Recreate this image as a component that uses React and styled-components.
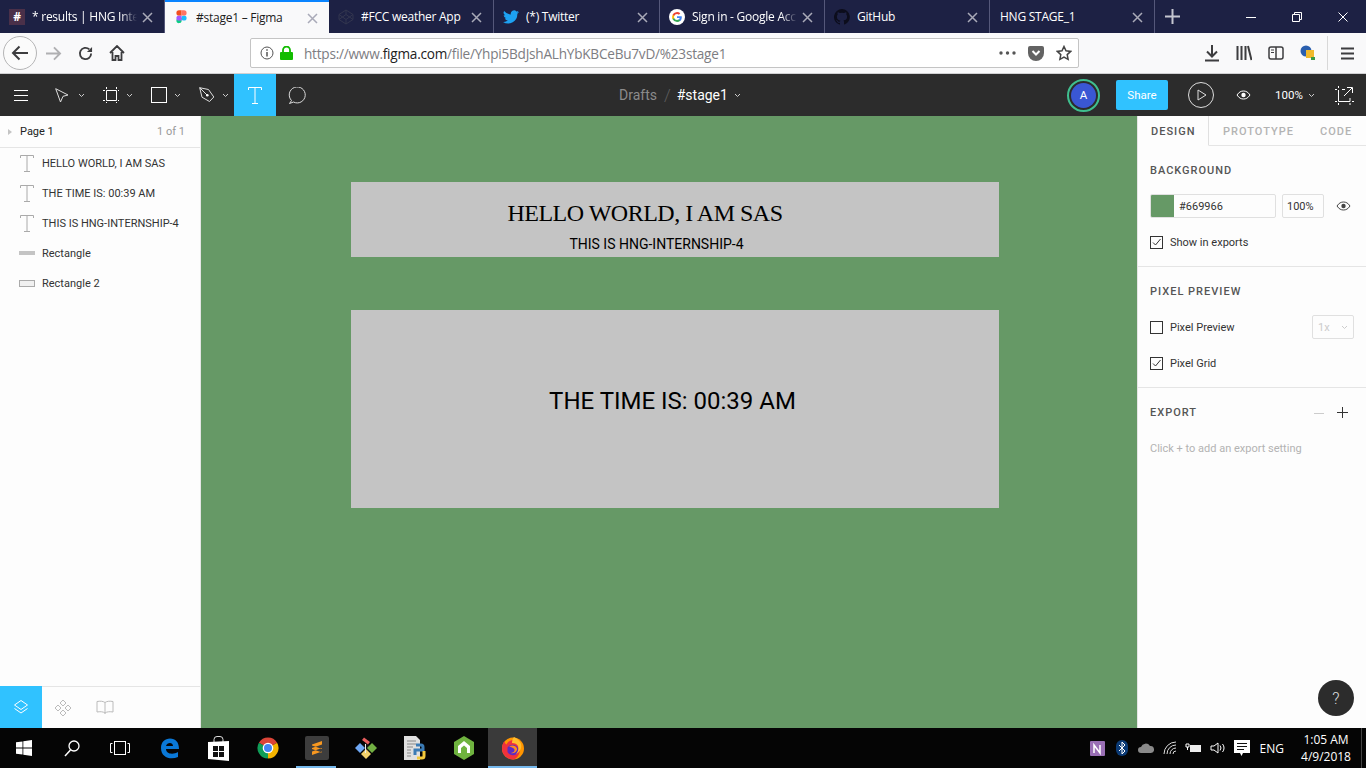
import React from 'react';
import styled, { createGlobalStyle } from 'styled-components';

const GlobalStyle = createGlobalStyle`
  html, body { margin: 0; padding: 0; background: #fff; }
  * { box-sizing: border-box; }
  body { font-family: Roboto, "Liberation Sans", sans-serif; overflow: hidden; }
`;

const Screen = styled.div`
  width: 1366px;
  height: 768px;
  display: flex;
  flex-direction: column;
  overflow: hidden;
`;

/* browser tabs */
const TabBar = styled.div`
  height: 33px;
  background: #1d2144;
  display: flex;
  align-items: stretch;
  flex-shrink: 0;
`;

const Tab = styled.div`
  width: ${p => p.$w}px;
  position: relative;
  display: flex;
  align-items: center;
  padding-left: ${p => p.$pad}px;
  font: 12px "Open Sans", "Noto Sans", sans-serif;
  letter-spacing: -0.25px;
  color: ${p => (p.$active ? '#1c1c1c' : '#fff')};
  background: ${p => (p.$active ? '#f9f9fa' : 'transparent')};
  border-top: ${p => (p.$active ? '2px solid #0a84ff' : 'none')};
  border-right: ${p => (p.$active ? 'none' : '1px solid #55587a')};
`;

const TabIcon = styled.span`
  width: 16px;
  height: 16px;
  margin-right: 7px;
  flex-shrink: 0;
  display: flex;
  align-items: center;
  justify-content: center;
`;

const TabTitle = styled.span`
  width: ${p => p.$w}px;
  white-space: nowrap;
  overflow: hidden;
  flex-shrink: 0;
  ${p => p.$fade && 'mask-image: linear-gradient(to right, #000 85%, transparent);'}
`;

const TabClose = styled.svg`
  position: absolute;
  right: 11px;
  top: 50%;
  margin-top: -5px;
  width: 11px;
  height: 11px;
`;

const HashIcon = styled.span`
  width: 16px;
  height: 16px;
  background: #4a3049;
  color: #fff;
  font: bold 12px "Open Sans", sans-serif;
  display: flex;
  align-items: center;
  justify-content: center;
`;

const NewTab = styled.div`
  width: 34px;
  display: flex;
  align-items: center;
  justify-content: center;
`;

const WindowButtons = styled.div`
  margin-left: auto;
  display: flex;
  align-items: center;
  gap: 36px;
  padding-right: 18px;
`;

/* address bar */
const NavBar = styled.div`
  height: 41px;
  background: #f9f9fa;
  border-bottom: 1px solid #d0d0d2;
  display: flex;
  align-items: center;
  padding-left: 3px;
  flex-shrink: 0;
`;

const BackButton = styled.div`
  width: 34px;
  height: 34px;
  border-radius: 50%;
  border: 1px solid #b5b5b6;
  background: #fbfbfb;
  display: flex;
  align-items: center;
  justify-content: center;
`;

const NavIcon = styled.div`
  width: 32px;
  display: flex;
  align-items: center;
  justify-content: center;
`;

const UrlBox = styled.div`
  width: 829px;
  height: 30px;
  margin-left: 117px;
  background: #fff;
  border: 1px solid #c4c4c4;
  border-radius: 2px;
  display: flex;
  align-items: center;
  padding-left: 9px;
`;

const UrlText = styled.div`
  margin-left: 11px;
  font: 13.6px "Open Sans", "Noto Sans", sans-serif;
  color: #7d7d82;
  white-space: nowrap;
  letter-spacing: -0.23px;
`;

const UrlDark = styled.span`
  color: #222;
`;

const UrlActions = styled.div`
  margin-left: auto;
  display: flex;
  align-items: center;
  gap: 12px;
  padding-right: 6px;
`;

const NavRight = styled.div`
  display: flex;
  align-items: center;
  margin-left: 125px;
`;

const NavSlot = styled.div`
  width: 32px;
  display: flex;
  justify-content: center;
  margin-left: ${p => (p.$first ? '-8px' : '0')};
`;

const NavDivider = styled.div`
  width: 1px;
  height: 34px;
  background: #d8d8d8;
  margin: 0 13px 0 3px;
`;

/* figma toolbar */
const Toolbar = styled.div`
  height: 42px;
  background: #2c2c2c;
  display: flex;
  align-items: center;
  position: relative;
  flex-shrink: 0;
`;

const ToolButton = styled.div`
  width: ${p => p.$w}px;
  height: 42px;
  display: flex;
  align-items: center;
  justify-content: center;
  background: ${p => (p.$active ? '#30c2ff' : 'transparent')};
  flex-shrink: 0;
`;

const ToolMenu = styled(ToolButton)`
  justify-content: flex-start;
  padding-left: 13px;
  gap: 7px;
`;

const Crumbs = styled.div`
  position: absolute;
  left: 619px;
  top: 0;
  height: 42px;
  display: flex;
  align-items: center;
  font-size: 14px;
  color: #8b8b8b;
`;

const CrumbSlash = styled.span`
  margin: 0 6px 0 7px;
  color: #5e5e5e;
  font-size: 17px;
  font-weight: 300;
`;

const CrumbName = styled.span`
  color: #fff;
  margin-right: 6px;
`;

const ToolbarRight = styled.div`
  margin-left: auto;
  display: flex;
  align-items: center;
  height: 42px;
`;

const AvatarRing = styled.div`
  width: 33px;
  height: 33px;
  border-radius: 50%;
  border: 2.5px solid #3fbf8f;
  padding: 2px;
  background: #2c2c2c;
  margin-right: 16px;
`;

const Avatar = styled.div`
  width: 100%;
  height: 100%;
  border-radius: 50%;
  background: #3a57d4;
  color: #fff;
  font-size: 11.5px;
  display: flex;
  align-items: center;
  justify-content: center;
`;

const ShareButton = styled.div`
  width: 52px;
  height: 30px;
  border-radius: 2px;
  background: #30c2ff;
  color: #fff;
  font-size: 11.5px;
  display: flex;
  align-items: center;
  justify-content: center;
  margin-right: 20px;
`;

const PlayIcon = styled.svg`
  margin-right: 22px;
`;

const Zoom = styled.div`
  width: 40px;
  display: flex;
  align-items: center;
  gap: 5px;
  color: #fff;
  font-size: 11.5px;
  margin: 0 20px 0 24px;
  white-space: nowrap;
`;

const ExpandIcon = styled.svg`
  margin-right: 12px;
`;

/* main area */
const Main = styled.div`
  flex: 1;
  display: flex;
  min-height: 0;
`;

const LeftPanel = styled.div`
  width: 201px;
  background: #fdfdfd;
  border-right: 1px solid #e5e5e5;
  display: flex;
  flex-direction: column;
  flex-shrink: 0;
`;

const PageRow = styled.div`
  height: 32px;
  border-bottom: 1px solid #e5e5e5;
  display: flex;
  align-items: center;
  padding: 0 15px 0 8px;
  font-size: 11px;
  color: #222;
`;

const Caret = styled.span`
  width: 0;
  height: 0;
  border-left: 4px solid #c4c4c4;
  border-top: 3px solid transparent;
  border-bottom: 3px solid transparent;
  margin-right: 8px;
`;

const PageCount = styled.span`
  margin-left: auto;
  color: #999;
`;

const LayerList = styled.div`
  flex: 1;
`;

const Layer = styled.div`
  height: 30px;
  display: flex;
  align-items: center;
  padding-left: 18px;
  font-size: 11px;
  color: #333;
`;

const LayerIcon = styled.span`
  width: 18px;
  margin-right: 6px;
  display: flex;
  justify-content: center;
  flex-shrink: 0;
`;

const LeftTabs = styled.div`
  height: 42px;
  border-top: 1px solid #e5e5e5;
  display: flex;
  align-items: stretch;
`;

const LeftTab = styled.div`
  width: 42px;
  background: ${p => (p.$active ? '#30c2ff' : 'transparent')};
  display: flex;
  align-items: center;
  justify-content: center;
  margin-top: ${p => (p.$active ? '-1px' : '0')};
`;

const Canvas = styled.div`
  flex: 1;
  background: #669966;
  padding: 66px 0 0 150px;
  display: flex;
  flex-direction: column;
  gap: 53px;
`;

const Frame = styled.div`
  width: 648px;
  height: ${p => p.$h}px;
  background: #c4c4c4;
  color: #000;
  display: flex;
  flex-direction: column;
  align-items: center;
`;

const Heading = styled.div`
  font: 24px "Liberation Serif", serif;
  letter-spacing: -0.5px;
  margin: 16px 0 0 -60px;
  line-height: 30px;
  white-space: nowrap;
`;

const SubHeading = styled.div`
  font-size: 14px;
  line-height: 16px;
  margin: 8px 0 0 -37px;
  white-space: nowrap;
`;

const TimeText = styled.div`
  font-size: 24px;
  line-height: 28px;
  margin: 77px 0 0 -5px;
  white-space: nowrap;
`;

const RightPanel = styled.div`
  width: 229px;
  background: #fdfdfd;
  border-left: 1px solid #e5e5e5;
  position: relative;
  flex-shrink: 0;
  font-size: 11px;
  color: #333;
`;

const PanelTabs = styled.div`
  height: 30px;
  display: flex;
  align-items: center;
  border-bottom: 1px solid #e5e5e5;
  font-size: 11px;
  font-weight: 500;
  letter-spacing: 1px;
`;

const PanelTab = styled.div`
  height: 30px;
  display: flex;
  align-items: center;
  width: ${p => p.$w}px;
  padding-left: ${p => p.$pad}px;
  padding-top: 1px;
  color: ${p => (p.$active ? '#555' : '#b3b3b3')};
  background: ${p => (p.$active ? '#fdfdfd' : 'transparent')};
  border-right: ${p => (p.$active ? '1px solid #e0e0e0' : 'none')};
  border-bottom: ${p => (p.$active ? '1px solid #fdfdfd' : 'none')};
  margin-top: ${p => (p.$active ? '1px' : '0')};
`;

const Section = styled.div`
  height: ${p => p.$h}px;
  padding: 18px 12px 0 12px;
  border-bottom: ${p => (p.$last ? 'none' : '1px solid #e5e5e5')};
`;

const SectionTitle = styled.div`
  font-size: 11px;
  font-weight: 500;
  letter-spacing: 1px;
  line-height: 13px;
  color: #555;
  display: flex;
  align-items: center;
  justify-content: space-between;
`;

const ColorRow = styled.div`
  display: flex;
  align-items: center;
  margin-top: 17px;
`;

const ColorField = styled.div`
  width: 126px;
  height: 24px;
  border: 1px solid #e0e0e0;
  border-radius: 2px;
  display: flex;
  align-items: center;
  overflow: hidden;
`;

const Swatch = styled.div`
  width: 23px;
  height: 24px;
  background: #669966;
  margin-right: 5px;
`;

const PercentField = styled.div`
  width: 42px;
  height: 24px;
  margin-left: 6px;
  border: 1px solid #e0e0e0;
  border-radius: 2px;
  display: flex;
  align-items: center;
  padding-left: 4px;
`;

const EyeSlot = styled.span`
  margin-left: 12px;
  display: flex;
`;

const CheckRow = styled.div`
  display: flex;
  align-items: center;
  height: 24px;
  margin-top: ${p => p.$mt}px;
`;

const CheckBox = styled.span`
  width: 13px;
  height: 13px;
  border: 1px solid #333;
  margin-right: 7px;
  display: flex;
  align-items: center;
  justify-content: center;
  flex-shrink: 0;
`;

const ScaleSelect = styled.div`
  margin-left: auto;
  width: 42px;
  height: 24px;
  border: 1px solid #e0e0e0;
  border-radius: 2px;
  color: #ccc;
  display: flex;
  align-items: center;
  justify-content: space-between;
  padding: 0 5px;
`;

const Hint = styled.div`
  color: #b3b3b3;
  margin-top: 23px;
`;

const ExportActions = styled.span`
  display: flex;
  align-items: center;
  gap: 13px;
  margin-right: 6px;
`;

const HelpButton = styled.div`
  position: absolute;
  right: 12px;
  bottom: 12px;
  width: 36px;
  height: 36px;
  border-radius: 50%;
  background: #2c2c2c;
  color: #ddd;
  font-size: 16px;
  font-weight: 300;
  display: flex;
  align-items: center;
  justify-content: center;
`;

/* windows taskbar */
const Taskbar = styled.div`
  height: 40px;
  background: #050505;
  display: flex;
  align-items: center;
  flex-shrink: 0;
`;

const TaskItem = styled.div`
  width: ${p => p.$w || 49}px;
  height: 40px;
  margin-left: ${p => p.$ml || 0}px;
  position: relative;
  display: flex;
  align-items: center;
  justify-content: center;
  background: ${p => (p.$active ? '#3a3a3a' : 'transparent')};
  flex-shrink: 0;

  &::after {
    content: '';
    display: ${p => (p.$active || p.$open ? 'block' : 'none')};
    position: absolute;
    left: ${p => (p.$active ? 0 : 4)}px;
    right: ${p => (p.$active ? 0 : 5)}px;
    bottom: 0;
    height: 2px;
    background: #76b9ed;
  }
`;

const Tray = styled.div`
  margin-left: auto;
  display: flex;
  align-items: center;
  height: 40px;
  color: #fff;
`;

const TrayIcon = styled.div`
  width: 24px;
  display: flex;
  align-items: center;
  justify-content: center;
`;

const Lang = styled.div`
  font: 12px "Open Sans", sans-serif;
  margin: 0 17px 0 6px;
`;

const Clock = styled.div`
  font: 12px/17px "Open Sans", sans-serif;
  text-align: center;
  width: 50px;
  margin-right: 10px;
  white-space: nowrap;
`;

const ShowDesktop = styled.div`
  width: 1px;
  height: 40px;
  background: #444;
  margin-right: 4px;
`;

const CloseIcon = () => (
  <TabClose viewBox="0 0 11 11">
    <path d="M1 1l9 9M10 1l-9 9" stroke="#a9aab8" strokeWidth="1.5" fill="none" />
  </TabClose>
);

const Chev = ({ color = '#ccc' }) => (
  <svg width="7" height="5" viewBox="0 0 7 5">
    <path d="M1 1l2.5 2.5L6 1" stroke={color} strokeWidth="1" fill="none" />
  </svg>
);

const Check = () => (
  <svg width="11" height="11" viewBox="0 0 11 11">
    <path d="M2 5.5l2.5 2.5L9.5 2" stroke="#333" strokeWidth="1" fill="none" />
  </svg>
);

const Eye = ({ color }) => (
  <svg width="15" height="10" viewBox="0 0 15 10">
    <path d="M1 5c2-3 4-4 6.5-4S12 2 14 5c-2 3-4 4-6.5 4S3 8 1 5z" stroke={color} fill="none" />
    <circle cx="7.5" cy="5" r="2.2" fill={color} />
  </svg>
);

const TypeIcon = () => (
  <svg width="14" height="17" viewBox="0 0 14 17">
    <path d="M.5 3V.5h13V3M7 .5v16M4 16.5h6" stroke="#aaa" fill="none" />
  </svg>
);

const tabs = [
  { w: 165, pad: 9, title: '* results | HNG Inter', tw: 105, fade: true, icon: <HashIcon>#</HashIcon> },
  {
    w: 164, pad: 8, title: '#stage1 – Figma', tw: 100, active: true,
    icon: (
      <svg width="11" height="16" viewBox="0 0 11 16">
        <circle cx="8" cy="8" r="2.6" fill="#1abcfe" />
        <path d="M3 13a2.6 2.6 0 0 0 2.6-2.6V8H3a2.6 2.6 0 0 0 0 5.2z" fill="#0acf83" />
        <path d="M.4 8A2.6 2.6 0 0 1 3 5.4h2.6v5.2H3A2.6 2.6 0 0 1 .4 8z" fill="#a259ff" />
        <path d="M.4 2.9A2.6 2.6 0 0 1 3 .3h2.6v5.2H3A2.6 2.6 0 0 1 .4 2.9z" fill="#f24e1e" />
        <path d="M5.6.3H8a2.6 2.6 0 0 1 0 5.2H5.6z" fill="#ff7262" />
      </svg>
    ),
  },
  {
    w: 165, pad: 9, title: '#FCC weather App', tw: 110,
    icon: (
      <svg width="16" height="16" viewBox="0 0 16 16">
        <path d="M8 1l7 4.500v5L8 15l-7-4.500v-5zM8 1v4.500M8 10.500V15M1 5.500l7 5 7-5M1 10.500l7-5 7 5" stroke="#33364f" fill="none" />
      </svg>
    ),
  },
  {
    w: 166, pad: 9, title: '(*) Twitter', tw: 110,
    icon: (
      <svg width="16" height="14" viewBox="0 0 24 20">
        <path d="M24 2.400a10 10 0 0 1-2.800.8A5 5 0 0 0 23.300.5a10 10 0 0 1-3.100 1.200 4.900 4.900 0 0 0-8.400 4.500A14 14 0 0 1 1.700.9a4.900 4.900 0 0 0 1.500 6.600 5 5 0 0 1-2.200-.6 4.900 4.900 0 0 0 3.900 4.900 5 5 0 0 1-2.200.1 4.900 4.900 0 0 0 4.600 3.400A9.900 9.900 0 0 1 0 17.400 14 14 0 0 0 21.500 5q1.500-1 2.500-2.600z" fill="#1da1f2" />
      </svg>
    ),
  },
  {
    w: 165, pad: 9, title: 'Sign in - Google Acc', tw: 105, fade: true,
    icon: (
      <svg width="16" height="16" viewBox="0 0 16 16">
        <circle cx="8" cy="8" r="8" fill="#fff" />
        <path d="M12.800 8.200c0-.4 0-.7-.1-1H8v1.900h2.700a2.300 2.300 0 0 1-1 1.500v1.300h1.600c1-.9 1.500-2.200 1.500-3.700z" fill="#4285f4" />
        <path d="M8 13c1.300 0 2.400-.4 3.300-1.200l-1.600-1.300c-.4.300-1 .5-1.700.5-1.300 0-2.400-.9-2.800-2H3.600v1.300A5 5 0 0 0 8 13z" fill="#34a853" />
        <path d="M5.200 9a3 3 0 0 1 0-2V5.700H3.600a5 5 0 0 0 0 4.600z" fill="#fbbc05" />
        <path d="M8 5c.7 0 1.400.3 1.900.7l1.400-1.400A5 5 0 0 0 3.600 5.700L5.200 7c.4-1.200 1.500-2 2.800-2z" fill="#ea4335" />
      </svg>
    ),
  },
  {
    w: 165, pad: 9, title: 'GitHub', tw: 100,
    icon: (
      <svg width="16" height="16" viewBox="0 0 16 16">
        <path d="M8 0a8 8 0 0 0-2.500 15.600c.4.100.5-.2.500-.4v-1.400c-2.200.5-2.700-1-2.700-1-.4-.9-.9-1.200-.9-1.200-.7-.5.100-.5.100-.5.800.1 1.200.8 1.200.8.700 1.200 1.900.9 2.300.7.100-.5.300-.9.500-1.100-1.800-.2-3.600-.9-3.600-4 0-.9.300-1.600.8-2.100-.1-.2-.4-1 .1-2.100 0 0 .7-.2 2.200.8a7.500 7.500 0 0 1 4 0c1.500-1 2.200-.8 2.200-.8.400 1.100.2 1.900.1 2.100.5.600.8 1.300.8 2.100 0 3.100-1.900 3.700-3.700 3.900.3.300.6.800.6 1.500v2.200c0 .2.100.5.600.4A8 8 0 0 0 8 0z" fill="#0c0d1c" />
      </svg>
    ),
  },
  { w: 165, pad: 10, title: 'HNG STAGE_1', tw: 100, icon: null },
];

const layers = [
  { name: 'HELLO WORLD, I AM SAS', kind: 'text' },
  { name: 'THE TIME IS: 00:39 AM', kind: 'text' },
  { name: 'THIS IS HNG-INTERNSHIP-4', kind: 'text' },
  { name: 'Rectangle', kind: 'line' },
  { name: 'Rectangle 2', kind: 'rect' },
];

const LayerGlyph = ({ kind }) => {
  if (kind === 'text') return <TypeIcon />;
  if (kind === 'line') {
    return (
      <svg width="16" height="4" viewBox="0 0 16 4">
        <rect width="16" height="4" fill="#c4c4c4" />
      </svg>
    );
  }
  return (
    <svg width="16" height="7" viewBox="0 0 16 7">
      <rect x=".5" y=".5" width="15" height="6" fill="#f0f0f0" stroke="#aaa" />
    </svg>
  );
};

export default function App() {
  return (
    <Screen>
      <GlobalStyle />
      <TabBar>
        {tabs.map(t => (
          <Tab key={t.title} $w={t.w} $pad={t.pad} $active={t.active}>
            {t.icon && <TabIcon>{t.icon}</TabIcon>}
            <TabTitle $w={t.tw} $fade={t.fade}>{t.title}</TabTitle>
            <CloseIcon />
          </Tab>
        ))}
        <NewTab>
          <svg width="15" height="15" viewBox="0 0 15 15">
            <path d="M7.500 0v15M0 7.500h15" stroke="#c5c6d0" strokeWidth="2" />
          </svg>
        </NewTab>
        <WindowButtons>
          <svg width="10" height="10" viewBox="0 0 10 10">
            <path d="M0 5.500h10" stroke="#fff" />
          </svg>
          <svg width="10" height="10" viewBox="0 0 10 10">
            <path d="M.5 2.500h7v7h-7zM2.500 2.500v-2h7v7h-2" stroke="#fff" fill="none" />
          </svg>
          <svg width="10" height="10" viewBox="0 0 10 10">
            <path d="M.5.500l9 9M9.500.500l-9 9" stroke="#fff" />
          </svg>
        </WindowButtons>
      </TabBar>

      <NavBar>
        <BackButton>
          <svg width="18" height="16" viewBox="0 0 18 16">
            <path d="M17 8H2M8.500 1.500L2 8l6.500 6.500" stroke="#3d3d3f" strokeWidth="2" fill="none" />
          </svg>
        </BackButton>
        <NavIcon>
          <svg width="17" height="15" viewBox="0 0 18 16">
            <path d="M1 8h15M9.500 1.500L16 8l-6.500 6.500" stroke="#b0b0b2" strokeWidth="2" fill="none" />
          </svg>
        </NavIcon>
        <NavIcon>
          <svg width="15" height="15" viewBox="0 0 16 16">
            <path d="M14 8a6 6 0 1 1-2-4.500" stroke="#3d3d3f" strokeWidth="2" fill="none" />
            <path d="M15 1v5.500H9.500z" fill="#3d3d3f" />
          </svg>
        </NavIcon>
        <NavIcon>
          <svg width="16" height="16" viewBox="0 0 16 16">
            <path d="M1 8l7-7 7 7M3.500 7v8h3v-4h3v4h3V7" stroke="#3d3d3f" strokeWidth="1.800" fill="none" />
          </svg>
        </NavIcon>
        <UrlBox>
          <svg width="14" height="14" viewBox="0 0 14 14">
            <circle cx="7" cy="7" r="6" stroke="#555" fill="none" />
            <path d="M7 6v4.500M7 3.200v1.500" stroke="#555" strokeWidth="1.500" />
          </svg>
          <svg width="13" height="14" viewBox="0 0 13 14" style={{ marginLeft: 6 }}>
            <rect y="6" width="13" height="8" rx="1" fill="#12bc00" />
            <path d="M3 6.500V4a3.500 3.500 0 0 1 7 0v2.500" stroke="#12bc00" strokeWidth="1.800" fill="none" />
          </svg>
          <UrlText>
            https://www.<UrlDark>figma.com</UrlDark>/file/Yhpi5BdJshALhYbKBCeBu7vD/%23stage1
          </UrlText>
          <UrlActions>
            <svg width="17" height="4" viewBox="0 0 17 4">
              <circle cx="2" cy="2" r="1.700" fill="#555" />
              <circle cx="8.500" cy="2" r="1.700" fill="#555" />
              <circle cx="15" cy="2" r="1.700" fill="#555" />
            </svg>
            <svg width="16" height="15" viewBox="0 0 16 15">
              <path d="M2 0h12a2 2 0 0 1 2 2v5a8 8 0 0 1-16 0V2a2 2 0 0 1 2-2z" fill="#636363" />
              <path d="M4.500 5L8 8.500 11.500 5" stroke="#fff" strokeWidth="2" fill="none" />
            </svg>
            <svg width="16" height="16" viewBox="0 0 16 16">
              <path d="M8 1.500l2 4.300 4.700.6-3.500 3.200.9 4.700L8 12l-4.100 2.300.9-4.700-3.500-3.200 4.700-.6z" stroke="#444" strokeWidth="1.500" fill="none" />
            </svg>
          </UrlActions>
        </UrlBox>
        <NavRight>
          <NavSlot $first>
            <svg width="16" height="17" viewBox="0 0 16 17">
              <path d="M8 0v11M3 6.500l5 5 5-5M1 15.500h14" stroke="#3d3d3f" strokeWidth="2" fill="none" />
            </svg>
          </NavSlot>
          <NavSlot>
            <svg width="16" height="16" viewBox="0 0 16 16">
              <path d="M1.500 1v14M5.500 1v14M9.500 1v14M12 1l3.500 14" stroke="#3d3d3f" strokeWidth="2" fill="none" />
            </svg>
          </NavSlot>
          <NavSlot>
            <svg width="16" height="14" viewBox="0 0 16 14">
              <rect x="1" y="1" width="14" height="12" rx="2" stroke="#3d3d3f" strokeWidth="1.500" fill="none" />
              <path d="M8 1v12" stroke="#3d3d3f" strokeWidth="1.500" />
              <path d="M3 4h3M3 6.500h3" stroke="#3d3d3f" />
            </svg>
          </NavSlot>
          <NavSlot>
            <svg width="16" height="16" viewBox="0 0 16 16">
              <circle cx="6" cy="6" r="5.500" fill="#2a5fae" />
              <rect x="6" y="5" width="8" height="8" fill="#f0b92c" />
              <path d="M11 12h4v3h-4z" fill="#3a9a45" />
            </svg>
          </NavSlot>
          <NavDivider />
          <svg width="13" height="13" viewBox="0 0 13 13">
            <path d="M0 1.500h13M0 6.500h13M0 11.500h13" stroke="#3d3d3f" strokeWidth="2" />
          </svg>
        </NavRight>
      </NavBar>

      <Toolbar>
        <ToolButton $w={42}>
          <svg width="14" height="11" viewBox="0 0 14 11">
            <path d="M0 .5h14M0 5.500h14M0 10.500h14" stroke="#fff" />
          </svg>
        </ToolButton>
        <ToolMenu $w={48}>
          <svg width="16" height="15" viewBox="0 0 16 15">
            <path d="M.7.700L13 7 8 8.300 5.500 14z" stroke="#ddd" fill="none" />
          </svg>
          <Chev />
        </ToolMenu>
        <ToolMenu $w={48}>
          <svg width="16" height="16" viewBox="0 0 16 16">
            <path d="M3.500 3.500h10v10h-10z" stroke="#fff" fill="none" />
            <path d="M3.500 0v2M13.500 0v2M3.500 15v1M13.500 15v1M0 3.500h2M15 3.500h1M0 13.500h2M15 13.500h1" stroke="#fff" />
          </svg>
          <Chev />
        </ToolMenu>
        <ToolMenu $w={48}>
          <svg width="16" height="16" viewBox="0 0 16 16">
            <rect x=".5" y=".5" width="15" height="15" stroke="#fff" fill="none" />
          </svg>
          <Chev />
        </ToolMenu>
        <ToolMenu $w={48}>
          <svg width="16" height="16" viewBox="0 0 16 16">
            <path d="M.7.700l8.800 1.800 5.300 7.500-4.300 4.500L3 10.200zM.7.700L8 8" stroke="#ddd" fill="none" />
            <circle cx="8.300" cy="8.300" r="1.300" fill="#fff" />
          </svg>
          <Chev />
        </ToolMenu>
        <ToolButton $w={42} $active>
          <svg width="14" height="17" viewBox="0 0 14 17">
            <path d="M.5 3V.5h13V3M7 .5v16M4 16.500h6" stroke="#fff" fill="none" />
          </svg>
        </ToolButton>
        <ToolButton $w={42}>
          <svg width="18" height="17" viewBox="0 0 18 17">
            <path d="M3.500 13.500l-2 3 4-1.500A8 8 0 1 0 3.500 13.500z" stroke="#ddd" fill="none" />
          </svg>
        </ToolButton>
        <Crumbs>
          Drafts
          <CrumbSlash>/</CrumbSlash>
          <CrumbName>#stage1</CrumbName>
          <Chev />
        </Crumbs>
        <ToolbarRight>
          <AvatarRing>
            <Avatar>A</Avatar>
          </AvatarRing>
          <ShareButton>Share</ShareButton>
          <PlayIcon width="26" height="26" viewBox="0 0 26 26">
            <circle cx="13" cy="13" r="12.500" stroke="#ddd" fill="none" />
            <path d="M10 8l8 5-8 5z" stroke="#ddd" fill="none" />
          </PlayIcon>
          <Eye color="#fff" />
          <Zoom>
            100%
            <Chev />
          </Zoom>
          <ExpandIcon width="19" height="19" viewBox="0 0 19 19">
            <path d="M3.500 4v11.500H15V12M7 3.500h3M0 3.500h2M0 15.500h2M17 15.500h2M3.500 17v2M15 17v2M3.500 0v2" stroke="#fff" fill="none" />
            <path d="M9 10l8-8M12 1.500h5.500V7" stroke="#fff" fill="none" />
          </ExpandIcon>
        </ToolbarRight>
      </Toolbar>

      <Main>
        <LeftPanel>
          <PageRow>
            <Caret />
            Page 1
            <PageCount>1 of 1</PageCount>
          </PageRow>
          <LayerList>
            {layers.map(l => (
              <Layer key={l.name}>
                <LayerIcon>
                  <LayerGlyph kind={l.kind} />
                </LayerIcon>
                {l.name}
              </Layer>
            ))}
          </LayerList>
          <LeftTabs>
            <LeftTab $active>
              <svg width="16" height="16" viewBox="0 0 16 16">
                <path d="M8 1.500L14.500 6 8 10.500 1.500 6z" stroke="#fff" fill="none" />
                <path d="M1.500 9.500L8 14l6.500-4.500" stroke="#fff" fill="none" />
              </svg>
            </LeftTab>
            <LeftTab>
              <svg width="18" height="18" viewBox="0 0 18 18">
                <path d="M9 1l3 3-3 3-3-3zM9 11l3 3-3 3-3-3zM4 6l3 3-3 3-3-3zM14 6l3 3-3 3-3-3z" stroke="#bbb" fill="none" />
              </svg>
            </LeftTab>
            <LeftTab>
              <svg width="18" height="15" viewBox="0 0 18 15">
                <path d="M9 2.500C7 1 4 1 1 1.500v10.500c3-.5 6-.5 8 1 2-1.500 5-1.500 8-1V1.500C14 1 11 1 9 2.500zM9 2.500V14" stroke="#bbb" fill="none" />
              </svg>
            </LeftTab>
          </LeftTabs>
        </LeftPanel>

        <Canvas>
          <Frame $h={75}>
            <Heading>HELLO WORLD, I AM SAS</Heading>
            <SubHeading>THIS IS HNG-INTERNSHIP-4</SubHeading>
          </Frame>
          <Frame $h={198}>
            <TimeText>THE TIME IS: 00:39 AM</TimeText>
          </Frame>
        </Canvas>

        <RightPanel>
          <PanelTabs>
            <PanelTab $w={71} $pad={13} $active>DESIGN</PanelTab>
            <PanelTab $w={100} $pad={14}>PROTOTYPE</PanelTab>
            <PanelTab $w={50} $pad={11}>CODE</PanelTab>
          </PanelTabs>
          <Section $h={121}>
            <SectionTitle>BACKGROUND</SectionTitle>
            <ColorRow>
              <ColorField>
                <Swatch />
                #669966
              </ColorField>
              <PercentField>100%</PercentField>
              <EyeSlot>
                <Eye color="#444" />
              </EyeSlot>
            </ColorRow>
            <CheckRow $mt={12}>
              <CheckBox><Check /></CheckBox>
              Show in exports
            </CheckRow>
          </Section>
          <Section $h={121}>
            <SectionTitle>PIXEL PREVIEW</SectionTitle>
            <CheckRow $mt={17}>
              <CheckBox />
              Pixel Preview
              <ScaleSelect>1x <Chev /></ScaleSelect>
            </CheckRow>
            <CheckRow $mt={12}>
              <CheckBox><Check /></CheckBox>
              Pixel Grid
            </CheckRow>
          </Section>
          <Section $h={100} $last>
            <SectionTitle>
              EXPORT
              <ExportActions>
                <svg width="10" height="10" viewBox="0 0 10 10">
                  <path d="M0 5.500h10" stroke="#ccc" />
                </svg>
                <svg width="11" height="11" viewBox="0 0 11 11">
                  <path d="M0 5.500h11M5.500 0v11" stroke="#333" />
                </svg>
              </ExportActions>
            </SectionTitle>
            <Hint>Click + to add an export setting</Hint>
          </Section>
          <HelpButton>?</HelpButton>
        </RightPanel>
      </Main>

      <Taskbar>
        <TaskItem $w={48}>
          <svg width="16" height="16" viewBox="0 0 16 16">
            <path d="M0 2.300l6.500-.9v6.200H0zM7.300 1.300L16 0v7.600H7.300zM0 8.400h6.500v6.200L0 13.700zM7.300 8.400H16V16l-8.700-1.300z" fill="#fff" />
          </svg>
        </TaskItem>
        <TaskItem $w={48}>
          <svg width="16" height="17" viewBox="0 0 16 17">
            <circle cx="10" cy="6" r="5" stroke="#fff" strokeWidth="1.300" fill="none" />
            <path d="M6.500 10L1 16" stroke="#fff" strokeWidth="1.500" />
          </svg>
        </TaskItem>
        <TaskItem $w={48}>
          <svg width="20" height="14" viewBox="0 0 20 14">
            <rect x="4.500" y=".5" width="11" height="13" stroke="#fff" fill="none" />
            <path d="M2.500 2.500h-2v9h2M17.500 2.500h2v9h-2" stroke="#fff" fill="none" />
          </svg>
        </TaskItem>
        <TaskItem $ml={1}>
          <svg width="20" height="21" viewBox="0 0 20 21">
            <path d="M1 10C1 4 5 .5 10 .5c5.500 0 9 3.500 9 10.500H6c0 5 7 6 12 3v5c-7 3-17 1-17-9zm5-2h7c0-4-6-4-7 0z" fill="#0a78d7" />
          </svg>
        </TaskItem>
        <TaskItem>
          <svg width="21" height="25" viewBox="0 0 21 25">
            <path d="M6 6V3.500a3 3 0 0 1 3-3h3a3 3 0 0 1 3 3V6" stroke="#ddd" fill="none" />
            <path d="M0 6l21-1v20L0 23z" fill="#fff" />
            <path d="M5 10h5v5H5zM11 10h5v5h-5zM5 16h5v5H5zM11 16h5v5h-5z" fill="#111" />
          </svg>
        </TaskItem>
        <TaskItem>
          <svg width="22" height="22" viewBox="0 0 22 22">
            <path d="M11 11L1.900 5.750A10.500 10.500 0 0 1 20.100 5.750z" fill="#db4437" />
            <path d="M11 11L1.900 5.750A10.500 10.500 0 0 0 11 21.500z" fill="#0f9d58" />
            <path d="M11 11V21.500A10.500 10.500 0 0 0 20.100 5.750z" fill="#f4b400" />
            <circle cx="11" cy="11" r="5.300" fill="#fff" />
            <circle cx="11" cy="11" r="4" fill="#4285f4" />
          </svg>
        </TaskItem>
        <TaskItem $open>
          <svg width="24" height="24" viewBox="0 0 24 24">
            <rect width="24" height="24" rx="2" fill="#3d3d3d" />
            <path d="M17 5L7 8.500V12L17 8.500zM7 9.500L17 13v3.500L7 13zM17 12L7 15.500V19L17 15.500z" fill="#f89820" />
          </svg>
        </TaskItem>
        <TaskItem>
          <svg width="24" height="24" viewBox="0 0 24 24">
            <path d="M6 12l6-6 6 6-6 6z" fill="#111" />
            <path d="M1 12l5-5 5 5-5 5z" fill="#6fa8f5" />
            <path d="M13 12l5-5 5 5-5 5z" fill="#72b043" />
            <path d="M8 4l2-2.500 6 4.500-2 2.500z" fill="#e85d5d" />
            <path d="M7 18l5-5 5 5-5 5z" fill="#f2d16b" />
            <path d="M11.500 8v9" stroke="#eee" />
          </svg>
        </TaskItem>
        <TaskItem>
          <svg width="23" height="24" viewBox="0 0 23 24">
            <path d="M1 0h12l4 4v20H1z" fill="#e0e0e0" />
            <path d="M4 5h9M4 8h9M4 11h6M4 14h4M4 17h4M4 20h4" stroke="#888" />
            <path d="M13 9h5a2 2 0 0 1 2 2v3h-8v5" stroke="#3b7bb5" strokeWidth="3" fill="none" />
            <path d="M21 15v5a2 2 0 0 1-2 2h-5" stroke="#f4c93c" strokeWidth="3" fill="none" />
          </svg>
        </TaskItem>
        <TaskItem>
          <svg width="20" height="24" viewBox="0 0 20 24">
            <path d="M10 0l10 6v12l-10 6-10-6V6z" fill="#6fb33f" />
            <path d="M10 5l6 5v7h-3v-5l-3-2.500L7 12v5H4v-7z" fill="#fff" />
          </svg>
        </TaskItem>
        <TaskItem $active>
          <svg width="24" height="24" viewBox="0 0 24 24">
            <circle cx="12" cy="12.500" r="11" fill="#ff9500" />
            <path d="M12 23.500A11 11 0 0 1 1 12.500C1 9 2 7 3.500 5c0 2 1 3 2 3.500C7 5 10 4 13 4c5 1 6 5 6 9 0 6-4 10.500-7 10.500z" fill="#f0323c" />
            <path d="M6.500 11.500a6 6 0 0 1 11 3.500 6 6 0 0 1-11 1z" fill="#5b2bc4" />
            <path d="M13 1c4 2 6 4 7 7 1 4-1 8-5 10 2-2 3-5 2-8-1-2-3-3-6-3 0-3 1-5 2-6z" fill="#ffbd2e" />
            <path d="M8 10.500c3-2 7-1 8 2 .5 3-3 5.500-6 4.500 2.500-.5 4-2 3.500-3.500-.5-1.500-3-2.500-5.500-3z" fill="#ff8a1f" />
          </svg>
        </TaskItem>
        <Tray>
          <TrayIcon>
            <svg width="15" height="15" viewBox="0 0 15 15">
              <rect width="15" height="15" rx="1" fill="#9a6fb5" />
              <path d="M4 12V4l6 8V4" stroke="#fff" strokeWidth="1.500" fill="none" />
            </svg>
          </TrayIcon>
          <TrayIcon>
            <svg width="12" height="16" viewBox="0 0 12 16">
              <rect width="12" height="16" rx="6" fill="#0b3a75" />
              <path d="M3 5l6 6-3 3V2l3 3-6 6" stroke="#fff" fill="none" />
            </svg>
          </TrayIcon>
          <TrayIcon>
            <svg width="16" height="10" viewBox="0 0 16 10">
              <path d="M3 10a3 3 0 0 1 0-6 5 5 0 0 1 9-1 3.500 3.500 0 0 1 1 7z" fill="#8a8a8a" />
            </svg>
          </TrayIcon>
          <TrayIcon>
            <svg width="14" height="14" viewBox="0 0 14 14">
              <path d="M1 13A12 12 0 0 1 13 1M4 13a9 9 0 0 1 9-9M7 13a6 6 0 0 1 6-6M10 13a3 3 0 0 1 3-3" stroke="#ddd" fill="none" />
            </svg>
          </TrayIcon>
          <TrayIcon>
            <svg width="17" height="10" viewBox="0 0 17 10">
              <rect x="5" y="2" width="11" height="7" fill="#eee" />
              <path d="M1 1h3v3H1zM2.500 4v3" stroke="#fff" fill="none" />
            </svg>
          </TrayIcon>
          <TrayIcon>
            <svg width="16" height="12" viewBox="0 0 16 12">
              <path d="M1 4h3l4-3v10L4 8H1zM10 3.500a4 4 0 0 1 0 5M12.500 2a6 6 0 0 1 0 8" stroke="#fff" fill="none" />
            </svg>
          </TrayIcon>
          <TrayIcon>
            <svg width="16" height="16" viewBox="0 0 16 16">
              <path d="M0 0h16v13H9l-1.500 3L6 13H0z" fill="#fff" />
              <path d="M3 3.500h10M3 6.500h10M3 9.500h7" stroke="#111" />
            </svg>
          </TrayIcon>
          <Lang>ENG</Lang>
          <Clock>
            1:05 AM
            <br />
            4/9/2018
          </Clock>
          <ShowDesktop />
        </Tray>
      </Taskbar>
    </Screen>
  );
}
